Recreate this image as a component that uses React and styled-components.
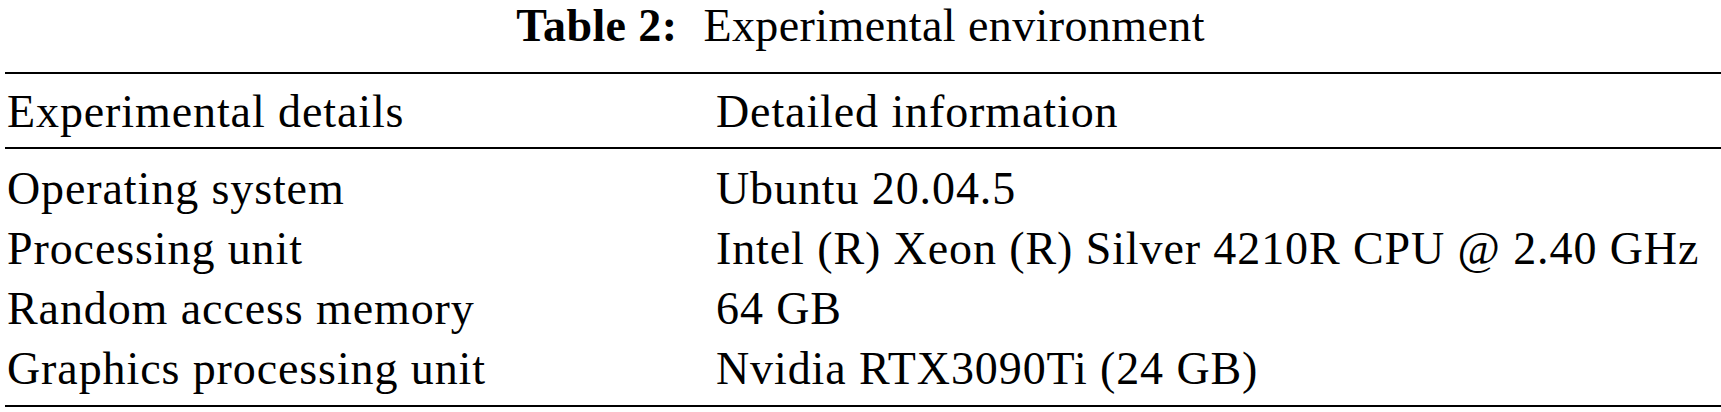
import React from 'react'
import styled, { createGlobalStyle } from 'styled-components'

const rows = [
    ['Operating system', 'Ubuntu 20.04.5'],
    ['Processing unit', 'Intel (R) Xeon (R) Silver 4210R CPU @ 2.40 GHz'],
    ['Random access memory', '64 GB'],
    ['Graphics processing unit', 'Nvidia RTX3090Ti (24 GB)'],
]

const App = () => {
    return (
        <Page>
            <GlobalStyle />
            <Caption>
                <Label>Table 2:</Label>Experimental environment
            </Caption>
            <Table>
                <Head>
                    <Row>
                        <Cell>Experimental details</Cell>
                        <Cell>Detailed information</Cell>
                    </Row>
                </Head>
                <Body>
                    {rows.map(([name, value]) => (
                        <Row key={name}>
                            <Cell>{name}</Cell>
                            <Cell>{value}</Cell>
                        </Row>
                    ))}
                </Body>
            </Table>
        </Page>
    )
}

export default App

const GlobalStyle = createGlobalStyle`
html, body {
margin: 0;
padding: 0;
background: #fff;
}
body {
font-family: "Liberation Serif", "Times New Roman", serif;
color: #000;
}
`

const Page = styled.div`
width: 1721px;
padding-top: 5px;
`

const Caption = styled.div`
text-align: center;
font-size: 46px;
line-height: 51px;
letter-spacing: 0.4px;
margin: -5px 0 21px;
white-space: nowrap;
`

const Label = styled.span`
font-weight: bold;
margin-right: 26px;
`

const Table = styled.div`
margin-left: 5px;
border-top: 2px solid #000;
border-bottom: 2px solid #000;
`

const Head = styled.div`
padding: 7.5px 0 5.5px;
border-bottom: 2px solid #000;
`

const Body = styled.div`
padding: 9.5px 0 6.5px;
`

const Row = styled.div`
display: grid;
grid-template-columns: 709px 1fr;
font-size: 46px;
line-height: 60px;
letter-spacing: 0.9px;
white-space: nowrap;
`

const Cell = styled.div`
padding-left: 2px;
`
